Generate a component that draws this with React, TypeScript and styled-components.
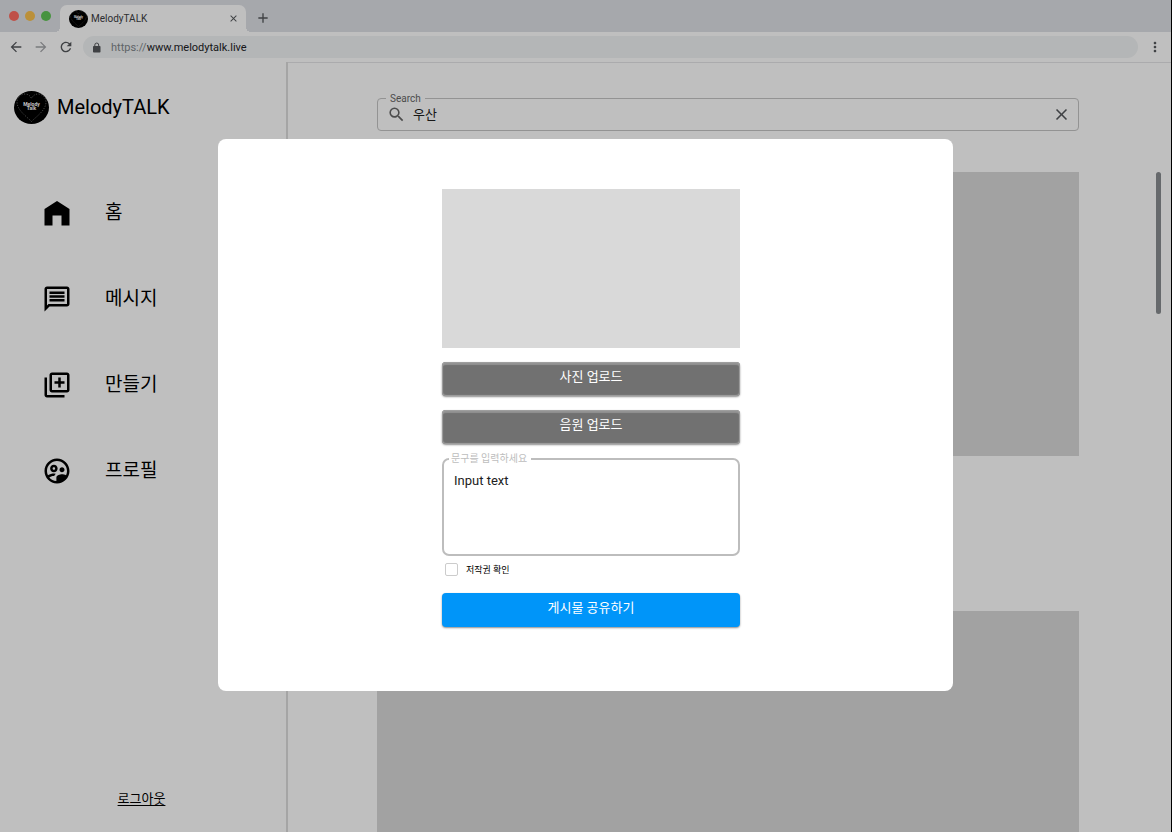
import React from "react";
import styled, { createGlobalStyle } from "styled-components";
import {
  MdArrowBack,
  MdArrowForward,
  MdRefresh,
  MdClose,
  MdAdd,
  MdMoreVert,
  MdSearch,
  MdOutlineMessage,
  MdOutlineLibraryAdd,
  MdOutlineSupervisedUserCircle,
} from "react-icons/md";

const GlobalStyle = createGlobalStyle`
  *, *::before, *::after { box-sizing: border-box; }
  body {
    margin: 0;
    background: #fff;
    color: #000;
    font-family: Roboto, "Noto Sans CJK KR", sans-serif;
  }
  button, input, textarea { font: inherit; color: inherit; }
  svg { display: block; flex: none; }
`;

const Window = styled.div`
  display: flex;
  flex-direction: column;
  height: 100vh;
  overflow: hidden;
  border-right: 1px solid #000;
`;

const TabStrip = styled.header`
  display: flex;
  flex: none;
  align-items: flex-end;
  height: 32px;
  background: #dee1e6;
`;

const Lights = styled.div`
  display: flex;
  gap: 6px;
  width: 60px;
  padding: 0 0 11px 9px;
`;

const Light = styled.span<{ $color: string }>`
  width: 10px;
  height: 10px;
  border-radius: 50%;
  background: ${(p) => p.$color};
`;

const Tab = styled.div`
  position: relative;
  display: flex;
  align-items: center;
  gap: 3px;
  width: 186px;
  height: 27px;
  padding: 0 7px 0 9px;
  border-radius: 7px 7px 0 0;
  background: #fff;
  font-size: 10px;
  color: #3c4043;

  &::before,
  &::after {
    content: "";
    position: absolute;
    bottom: 0;
    width: 5px;
    height: 5px;
  }
  &::before {
    right: 100%;
    background: radial-gradient(circle at 0 0, transparent 5px, #fff 5px);
  }
  &::after {
    left: 100%;
    background: radial-gradient(circle at 100% 0, transparent 5px, #fff 5px);
  }
`;

const TabTitle = styled.span`
  flex: 1;
`;

const IconButton = styled.button<{ $color?: string }>`
  display: flex;
  padding: 0;
  border: 0;
  background: none;
  color: ${(p) => p.$color ?? "#54575b"};
  cursor: pointer;
`;

const NewTab = styled(IconButton)`
  margin: 0 0 6px 9px;
`;

const Toolbar = styled.div`
  display: flex;
  flex: none;
  align-items: center;
  gap: 9px;
  height: 30px;
  padding: 0 8px;
`;

const Address = styled.button`
  display: flex;
  flex: 1;
  align-items: center;
  gap: 9px;
  height: 22px;
  padding: 0 8px;
  border: 0;
  border-radius: 11px;
  background: #f1f3f4;
  font-size: 11px;
  color: #202124;
  text-align: left;
  cursor: text;

  svg { color: #54575b; }
`;

const Scheme = styled.span`
  color: #80868b;
`;

const Page = styled.div`
  display: flex;
  flex: 1;
  min-height: 0;
`;

const Sidebar = styled.aside`
  display: flex;
  flex: none;
  flex-direction: column;
  width: 288px;
  padding: 28px 3px 24px 0;
  border-right: 2px solid #dcdcdc;
`;

const Brand = styled.a`
  display: flex;
  align-items: center;
  gap: 8px;
  padding-left: 14px;
  font-size: 20px;
  line-height: 35px;
  color: #000;
  text-decoration: none;
`;

const NavList = styled.ul`
  display: flex;
  flex: 1;
  flex-direction: column;
  gap: 56px;
  margin: 0;
  padding: 73px 0 0 42px;
  list-style: none;
`;

const NavLink = styled.a`
  display: flex;
  align-items: center;
  gap: 33px;
  font-size: 19px;
  line-height: 30px;
  color: #000;
  text-decoration: none;
`;

const Logout = styled.a`
  align-self: center;
  font-size: 13px;
  line-height: 19px;
  color: #000;
  text-underline-offset: 2px;
`;

const Main = styled.main`
  display: flex;
  flex: 1;
  flex-direction: column;
  gap: 41px;
  min-width: 0;
  padding: 35px 10px 0 89px;
  border-top: 1px solid #e4e5e7;
`;

const SearchBox = styled.fieldset`
  flex: none;
  height: 33px;
  min-width: 0;
  margin: 0 82px 0 0;
  padding: 0 7px 0 9px;
  border: 1px solid #c4c4c4;
  border-radius: 4px;
  color: #666;

  legend {
    margin-left: -1px;
    padding: 0 4px;
    font-size: 10px;
    line-height: 1px;
  }
`;

const SearchRow = styled.div`
  display: flex;
  align-items: center;
  gap: 7px;
  height: 31px;
`;

const SearchInput = styled.input`
  flex: 1;
  min-width: 0;
  padding: 0;
  border: 0;
  outline: 0;
  background: none;
  font-size: 13px;
  line-height: 20px;
  color: #212121;
`;

const FeedRow = styled.div`
  display: flex;
  gap: 77px;
  min-height: 0;
`;

const Feed = styled.div`
  display: flex;
  flex: 1;
  flex-direction: column;
  gap: 155px;
`;

const Post = styled.article`
  flex: none;
  height: 284px;
  background: #d9d9d9;
`;

const ScrollThumb = styled.div`
  width: 5px;
  height: 142px;
  border-radius: 3px;
  background: #888c90;
`;

const Backdrop = styled.div`
  position: fixed;
  inset: 0 1px 0 0;
  display: flex;
  align-items: center;
  justify-content: center;
  padding-bottom: 2px;
  background: rgba(0, 0, 0, 0.25);
`;

const Dialog = styled.form`
  display: flex;
  flex-direction: column;
  gap: 14px;
  width: 735px;
  max-width: 100%;
  padding: 50px 213px 64px 224px;
  border-radius: 8px;
  background: #fff;
`;

const Preview = styled.div`
  height: 159px;
  background: #d9d9d9;
`;

const ActionButton = styled.button<{ $primary?: boolean }>`
  height: 34px;
  padding: 0 0 4px;
  border: 0;
  border-radius: 4px;
  background: ${(p) => (p.$primary ? "#0095f9" : "#717171")};
  box-shadow: ${(p) =>
    p.$primary
      ? "0 1px 2px rgba(0, 0, 0, 0.45)"
      : "inset 0 0 1px 1px #a0a0a0, inset 0 3px 1px #929292, 0 1px 2px rgba(0, 0, 0, 0.45)"};
  font-size: 13px;
  line-height: 20px;
  color: #fff;
  cursor: pointer;
`;

const Caption = styled.fieldset`
  height: 98px;
  min-width: 0;
  margin: 0;
  padding: 0;
  border: 2px solid #bdbdbd;
  border-radius: 7px;

  legend {
    margin-left: 5px;
    padding: 0 4px 0 2px;
    font-size: 10px;
    line-height: 2px;
    color: #bdbdbd;
  }
`;

const CaptionInput = styled.textarea`
  display: block;
  width: 100%;
  height: 90px;
  padding: 12px 10px;
  border: 0;
  outline: 0;
  resize: none;
  background: none;
  font-size: 13px;
  line-height: 18px;
  color: #212121;
`;

const Consent = styled.label`
  display: flex;
  align-items: center;
  gap: 8px;
  height: 15px;
  margin: -8px 0 2px 3px;
  font-size: 9px;
`;

const Checkbox = styled.input`
  appearance: none;
  width: 13px;
  height: 13px;
  margin: 0;
  border: 1px solid #ccc;
  border-radius: 2px;

  &:checked { background: #0095f9; }
`;

function Logo({ width, height }: { width: number; height: number }) {
  return (
    <svg width={width} height={height} viewBox="0 0 35 33" aria-hidden="true">
      <ellipse cx="17.5" cy="16.5" rx="17.5" ry="16.5" fill="#000" />
      <path
        d="M17.5 30.5C12 25 3 19 3 11 3 6 7 3 11 3c3 0 5 1.500 6.500 4.500C19 4.500 21 3 24 3c4 0 8 3 8 8 0 8-9 14-14.500 19.500z"
        fill="none"
        stroke="#6c6c6c"
        strokeWidth="0.9"
        strokeDasharray="1.2 1.4"
      />
      <g fill="#fff" fontFamily="Roboto, sans-serif" fontSize="5" fontWeight="700" textAnchor="middle">
        <text x="17.500" y="14.500">Melody</text>
        <text x="17.500" y="18.500">Talk</text>
      </g>
    </svg>
  );
}

function HomeIcon() {
  return (
    <svg width="30" height="30" viewBox="0 0 30 30" aria-hidden="true">
      <path d="M2.500 27.500V11L15 3l12.500 8v16.500h-8V17.500h-9v10z" fill="#000" />
    </svg>
  );
}

function LockIcon() {
  return (
    <svg width="11" height="11" viewBox="0 0 11 11" aria-hidden="true">
      <rect x="2" y="4" width="7.500" height="6.500" rx="0.8" fill="currentColor" />
      <path d="M3.800 4.500V3a1.950 1.950 0 0 1 3.900 0v1.500" fill="none" stroke="currentColor" />
    </svg>
  );
}

const navItems = [
  { label: "홈", icon: <HomeIcon /> },
  { label: "메시지", icon: <MdOutlineMessage size={30} /> },
  { label: "만들기", icon: <MdOutlineLibraryAdd size={30} /> },
  { label: "프로필", icon: <MdOutlineSupervisedUserCircle size={30} /> },
];

export default function App() {
  return (
    <>
      <GlobalStyle />
      <Window>
        <TabStrip>
          <Lights>
            <Light $color="#ff6b60" />
            <Light $color="#fac04c" />
            <Light $color="#5fc454" />
          </Lights>
          <Tab>
            <Logo width={19} height={18} />
            <TabTitle>MelodyTALK</TabTitle>
            <IconButton type="button" aria-label="Close tab">
              <MdClose size={11} />
            </IconButton>
          </Tab>
          <NewTab type="button" aria-label="New tab">
            <MdAdd size={16} />
          </NewTab>
        </TabStrip>
        <Toolbar>
          <IconButton type="button" aria-label="Back">
            <MdArrowBack size={16} />
          </IconButton>
          <IconButton type="button" aria-label="Forward" $color="#a3a5a8">
            <MdArrowForward size={16} />
          </IconButton>
          <IconButton type="button" aria-label="Reload">
            <MdRefresh size={16} />
          </IconButton>
          <Address type="button" aria-label="Address">
            <LockIcon />
            <span>
              <Scheme>https://</Scheme>www.melodytalk.live
            </span>
          </Address>
          <IconButton type="button" aria-label="Menu">
            <MdMoreVert size={16} />
          </IconButton>
        </Toolbar>
        <Page>
          <Sidebar>
            <Brand href="#">
              <Logo width={35} height={33} />
              MelodyTALK
            </Brand>
            <NavList>
              {navItems.map((item) => (
                <li key={item.label}>
                  <NavLink href="#">
                    {item.icon}
                    {item.label}
                  </NavLink>
                </li>
              ))}
            </NavList>
            <Logout href="#">로그아웃</Logout>
          </Sidebar>
          <Main>
            <SearchBox>
              <legend>
                <label htmlFor="search">Search</label>
              </legend>
              <SearchRow>
                <MdSearch size={19} />
                <SearchInput id="search" type="text" defaultValue="우산" />
                <IconButton type="button" aria-label="Clear search">
                  <MdClose size={19} />
                </IconButton>
              </SearchRow>
            </SearchBox>
            <FeedRow>
              <Feed>
                <Post />
                <Post />
              </Feed>
              <ScrollThumb />
            </FeedRow>
          </Main>
        </Page>
      </Window>
      <Backdrop>
        <Dialog role="dialog" aria-modal="true" aria-label="게시물 만들기">
          <Preview />
          <ActionButton type="button">사진 업로드</ActionButton>
          <ActionButton type="button">음원 업로드</ActionButton>
          <Caption>
            <legend>
              <label htmlFor="caption">문구를 입력하세요</label>
            </legend>
            <CaptionInput id="caption" defaultValue="Input text" />
          </Caption>
          <Consent>
            <Checkbox type="checkbox" />
            저작권 확인
          </Consent>
          <ActionButton type="button" $primary>
            게시물 공유하기
          </ActionButton>
        </Dialog>
      </Backdrop>
    </>
  );
}
